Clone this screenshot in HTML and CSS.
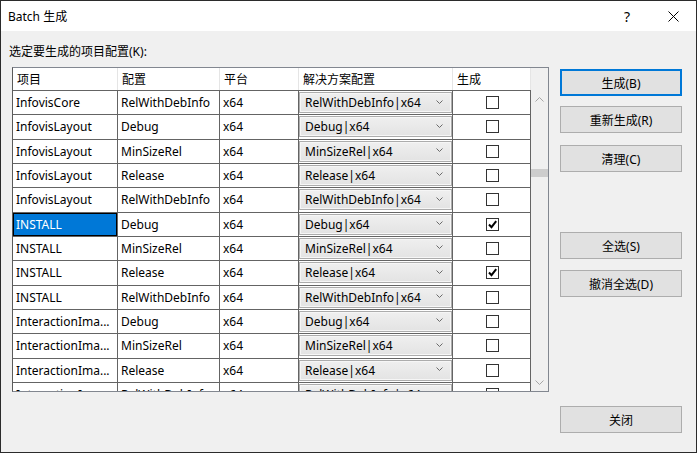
FILE: index.html
```html
<!DOCTYPE html>
<html lang="zh-CN">
<head>
<meta charset="utf-8">
<title>Batch 生成</title>
<link rel="stylesheet" href="styles.css">
</head>
<body>
<div class="window">
  <div class="titlebar">
    <span class="title">Batch 生成</span>
    <span class="cap help">?</span>
    <span class="cap close"><svg width="11" height="11" viewBox="0 0 11 11"><path d="M0.5 0.5L10.5 10.5M10.5 0.5L0.5 10.5" stroke="#000" stroke-width="1" fill="none"/></svg></span>
  </div>
  <div class="body">
    <div class="left">
      <div class="label">选定要生成的项目配置(K):</div>
      <div class="grid">
        <div class="hdr">
          <div class="hc c1">项目</div>
          <div class="hc c2">配置</div>
          <div class="hc c3">平台</div>
          <div class="hc c4">解决方案配置</div>
          <div class="hc c5">生成</div>
        </div>
        <div class="corner"></div>
        <div class="rows">
          <div class="row"><div class="cell c1">InfovisCore</div><div class="cell c2">RelWithDebInfo</div><div class="cell c3">x64</div><div class="cell c4"><div class="combo"><span>RelWithDebInfo|x64</span><svg class="chev" width="7" height="4" viewBox="0 0 7 4"><path d="M0.5 0.5L3.5 3.5L6.5 0.5" stroke="#6a6a6a" fill="none"/></svg></div></div><div class="cell c5"><span class="chk"></span></div></div>
          <div class="row"><div class="cell c1">InfovisLayout</div><div class="cell c2">Debug</div><div class="cell c3">x64</div><div class="cell c4"><div class="combo"><span>Debug|x64</span><svg class="chev" width="7" height="4" viewBox="0 0 7 4"><path d="M0.5 0.5L3.5 3.5L6.5 0.5" stroke="#6a6a6a" fill="none"/></svg></div></div><div class="cell c5"><span class="chk"></span></div></div>
          <div class="row"><div class="cell c1">InfovisLayout</div><div class="cell c2">MinSizeRel</div><div class="cell c3">x64</div><div class="cell c4"><div class="combo"><span>MinSizeRel|x64</span><svg class="chev" width="7" height="4" viewBox="0 0 7 4"><path d="M0.5 0.5L3.5 3.5L6.5 0.5" stroke="#6a6a6a" fill="none"/></svg></div></div><div class="cell c5"><span class="chk"></span></div></div>
          <div class="row"><div class="cell c1">InfovisLayout</div><div class="cell c2">Release</div><div class="cell c3">x64</div><div class="cell c4"><div class="combo"><span>Release|x64</span><svg class="chev" width="7" height="4" viewBox="0 0 7 4"><path d="M0.5 0.5L3.5 3.5L6.5 0.5" stroke="#6a6a6a" fill="none"/></svg></div></div><div class="cell c5"><span class="chk"></span></div></div>
          <div class="row"><div class="cell c1">InfovisLayout</div><div class="cell c2">RelWithDebInfo</div><div class="cell c3">x64</div><div class="cell c4"><div class="combo"><span>RelWithDebInfo|x64</span><svg class="chev" width="7" height="4" viewBox="0 0 7 4"><path d="M0.5 0.5L3.5 3.5L6.5 0.5" stroke="#6a6a6a" fill="none"/></svg></div></div><div class="cell c5"><span class="chk"></span></div></div>
          <div class="row"><div class="cell c1 sel">INSTALL</div><div class="cell c2">Debug</div><div class="cell c3">x64</div><div class="cell c4"><div class="combo"><span>Debug|x64</span><svg class="chev" width="7" height="4" viewBox="0 0 7 4"><path d="M0.5 0.5L3.5 3.5L6.5 0.5" stroke="#6a6a6a" fill="none"/></svg></div></div><div class="cell c5"><span class="chk"><svg width="11" height="11" viewBox="0 0 11 11"><path d="M2 5.5L4.5 8.2L9.2 2.2" stroke="#000" stroke-width="2" fill="none"/></svg></span></div></div>
          <div class="row"><div class="cell c1">INSTALL</div><div class="cell c2">MinSizeRel</div><div class="cell c3">x64</div><div class="cell c4"><div class="combo"><span>MinSizeRel|x64</span><svg class="chev" width="7" height="4" viewBox="0 0 7 4"><path d="M0.5 0.5L3.5 3.5L6.5 0.5" stroke="#6a6a6a" fill="none"/></svg></div></div><div class="cell c5"><span class="chk"></span></div></div>
          <div class="row"><div class="cell c1">INSTALL</div><div class="cell c2">Release</div><div class="cell c3">x64</div><div class="cell c4"><div class="combo"><span>Release|x64</span><svg class="chev" width="7" height="4" viewBox="0 0 7 4"><path d="M0.5 0.5L3.5 3.5L6.5 0.5" stroke="#6a6a6a" fill="none"/></svg></div></div><div class="cell c5"><span class="chk"><svg width="11" height="11" viewBox="0 0 11 11"><path d="M2 5.5L4.5 8.2L9.2 2.2" stroke="#000" stroke-width="2" fill="none"/></svg></span></div></div>
          <div class="row"><div class="cell c1">INSTALL</div><div class="cell c2">RelWithDebInfo</div><div class="cell c3">x64</div><div class="cell c4"><div class="combo"><span>RelWithDebInfo|x64</span><svg class="chev" width="7" height="4" viewBox="0 0 7 4"><path d="M0.5 0.5L3.5 3.5L6.5 0.5" stroke="#6a6a6a" fill="none"/></svg></div></div><div class="cell c5"><span class="chk"></span></div></div>
          <div class="row"><div class="cell c1">InteractionIma...</div><div class="cell c2">Debug</div><div class="cell c3">x64</div><div class="cell c4"><div class="combo"><span>Debug|x64</span><svg class="chev" width="7" height="4" viewBox="0 0 7 4"><path d="M0.5 0.5L3.5 3.5L6.5 0.5" stroke="#6a6a6a" fill="none"/></svg></div></div><div class="cell c5"><span class="chk"></span></div></div>
          <div class="row"><div class="cell c1">InteractionIma...</div><div class="cell c2">MinSizeRel</div><div class="cell c3">x64</div><div class="cell c4"><div class="combo"><span>MinSizeRel|x64</span><svg class="chev" width="7" height="4" viewBox="0 0 7 4"><path d="M0.5 0.5L3.5 3.5L6.5 0.5" stroke="#6a6a6a" fill="none"/></svg></div></div><div class="cell c5"><span class="chk"></span></div></div>
          <div class="row"><div class="cell c1">InteractionIma...</div><div class="cell c2">Release</div><div class="cell c3">x64</div><div class="cell c4"><div class="combo"><span>Release|x64</span><svg class="chev" width="7" height="4" viewBox="0 0 7 4"><path d="M0.5 0.5L3.5 3.5L6.5 0.5" stroke="#6a6a6a" fill="none"/></svg></div></div><div class="cell c5"><span class="chk"></span></div></div>
          <div class="row"><div class="cell c1">InteractionIma...</div><div class="cell c2">RelWithDebInfo</div><div class="cell c3">x64</div><div class="cell c4"><div class="combo"><span>RelWithDebInfo|x64</span><svg class="chev" width="7" height="4" viewBox="0 0 7 4"><path d="M0.5 0.5L3.5 3.5L6.5 0.5" stroke="#6a6a6a" fill="none"/></svg></div></div><div class="cell c5"><span class="chk"></span></div></div>
        </div>
        <div class="vscroll">
          <div class="sbtn"><svg width="9" height="5" viewBox="0 0 9 5"><path d="M0.5 4.5L4.5 0.5L8.5 4.5" stroke="#a6a6a6" fill="none"/></svg></div>
          <div class="track"><div class="thumb"></div></div>
          <div class="sbtn"><svg width="9" height="5" viewBox="0 0 9 5"><path d="M0.5 0.5L4.5 4.5L8.5 0.5" stroke="#a6a6a6" fill="none"/></svg></div>
        </div>
      </div>
    </div>
    <div class="buttons">
      <div class="btn default b1">生成(B)</div>
      <div class="btn b2">重新生成(R)</div>
      <div class="btn b3">清理(C)</div>
      <div class="btn b4">全选(S)</div>
      <div class="btn b5">撤消全选(D)</div>
      <div class="btn b6">关闭</div>
    </div>
  </div>
</div>
</body>
</html>
```
FILE: styles.css
```css
html, body {
  margin: 0;
  padding: 0;
  background: #f0f0f0;
}
body {
  font-family: "Noto Sans", "Noto Sans CJK SC", sans-serif;
  font-size: 12px;
  color: #000;
}
.window {
  width: 697px;
  height: 453px;
  box-sizing: border-box;
  border: 1px solid #2b2b2b;
  background: #f0f0f0;
  display: flex;
  flex-direction: column;
  overflow: hidden;
}
.titlebar {
  height: 30px;
  flex: none;
  background: #fff;
  display: flex;
  align-items: center;
  padding-left: 7px;
}
.title {
  flex: 1;
  font-size: 12px;
}
.cap {
  width: 46px;
  height: 30px;
  display: flex;
  align-items: center;
  justify-content: center;
}
.help {
  font-size: 14px;
}
.close svg {
  display: block;
}
.body {
  flex: 1;
  display: flex;
}
.left {
  width: 548px;
  flex: none;
  box-sizing: border-box;
  padding-left: 8px;
}
.label {
  margin-top: 13px;
  height: 16px;
  line-height: 16px;
  white-space: nowrap;
}
.grid {
  margin-top: 7px;
  margin-left: 3px;
  width: 537px;
  height: 325px;
  box-sizing: border-box;
  border: 1px solid #828790;
  border-left-color: #5a5a5a;
  display: grid;
  grid-template-columns: 518px 17px;
  grid-template-rows: 23px 300px;
  background: #fff;
}
.hdr {
  display: flex;
  background: #fff;
  border-bottom: 1px solid #646464;
}
.corner {
  background: #f0f0f0;
}
.hc {
  box-sizing: border-box;
  height: 22px;
  border-right: 1px solid #e5e5e5;
  display: flex;
  align-items: center;
  padding-left: 4px;
  white-space: nowrap;
}
.c1 { width: 105px; flex: none; }
.c2 { width: 102px; flex: none; }
.c3 { width: 79px; flex: none; }
.c4 { width: 154px; flex: none; }
.c5 { width: 78px; flex: none; }
.rows {
  overflow: hidden;
  background: #fff;
}
.row {
  height: 24.333px;
  box-sizing: border-box;
  border-bottom: 1px solid #646464;
  display: flex;
}
.cell {
  box-sizing: border-box;
  border-right: 1px solid #646464;
  display: flex;
  align-items: center;
  padding-left: 3px;
  white-space: nowrap;
  overflow: hidden;
}
.cell.c4 {
  padding: 1px 0 0 0;
  align-items: stretch;
}
.cell.c5 {
  padding: 0;
  justify-content: center;
  padding-left: 1px;
}
.cell.sel {
  background: #0078d7;
  color: #fff;
  box-shadow: inset 0 0 0 1px #000;
}
.combo {
  flex: 1;
  height: 21px;
  box-sizing: border-box;
  border: 1px solid #acacac;
  box-shadow: inset 0 0 0 1px #f6f6f6;
  background: linear-gradient(#efefef, #e3e3e3);
  display: flex;
  align-items: center;
  justify-content: space-between;
  padding: 0 8px 0 5px;
}
.chev {
  display: block;
  margin-top: -2px;
}
.chk {
  width: 13px;
  height: 13px;
  box-sizing: border-box;
  border: 1px solid #333;
  background: #fff;
  display: flex;
  align-items: center;
  justify-content: center;
}
.chk svg {
  display: block;
}
.vscroll {
  background: #f0f0f0;
  display: flex;
  flex-direction: column;
}
.sbtn {
  height: 17px;
  flex: none;
  display: flex;
  align-items: center;
  justify-content: center;
}
.sbtn svg {
  display: block;
}
.track {
  flex: 1;
}
.thumb {
  margin-top: 61px;
  height: 8px;
  background: #cdcdcd;
}
.buttons {
  display: flex;
  flex-direction: column;
  margin-left: 11px;
  width: 122px;
  flex: none;
}
.btn {
  height: 27px;
  box-sizing: border-box;
  border: 1px solid #adadad;
  background: #e1e1e1;
  display: flex;
  align-items: center;
  justify-content: center;
  white-space: nowrap;
}
.btn.default {
  border: 2px solid #0078d7;
}
.b1 { margin-top: 38px; }
.b2 { margin-top: 10px; }
.b3 { margin-top: 12px; }
.b4 { margin-top: 60px; }
.b5 { margin-top: 11px; }
.b6 { margin-top: 109px; }
```
